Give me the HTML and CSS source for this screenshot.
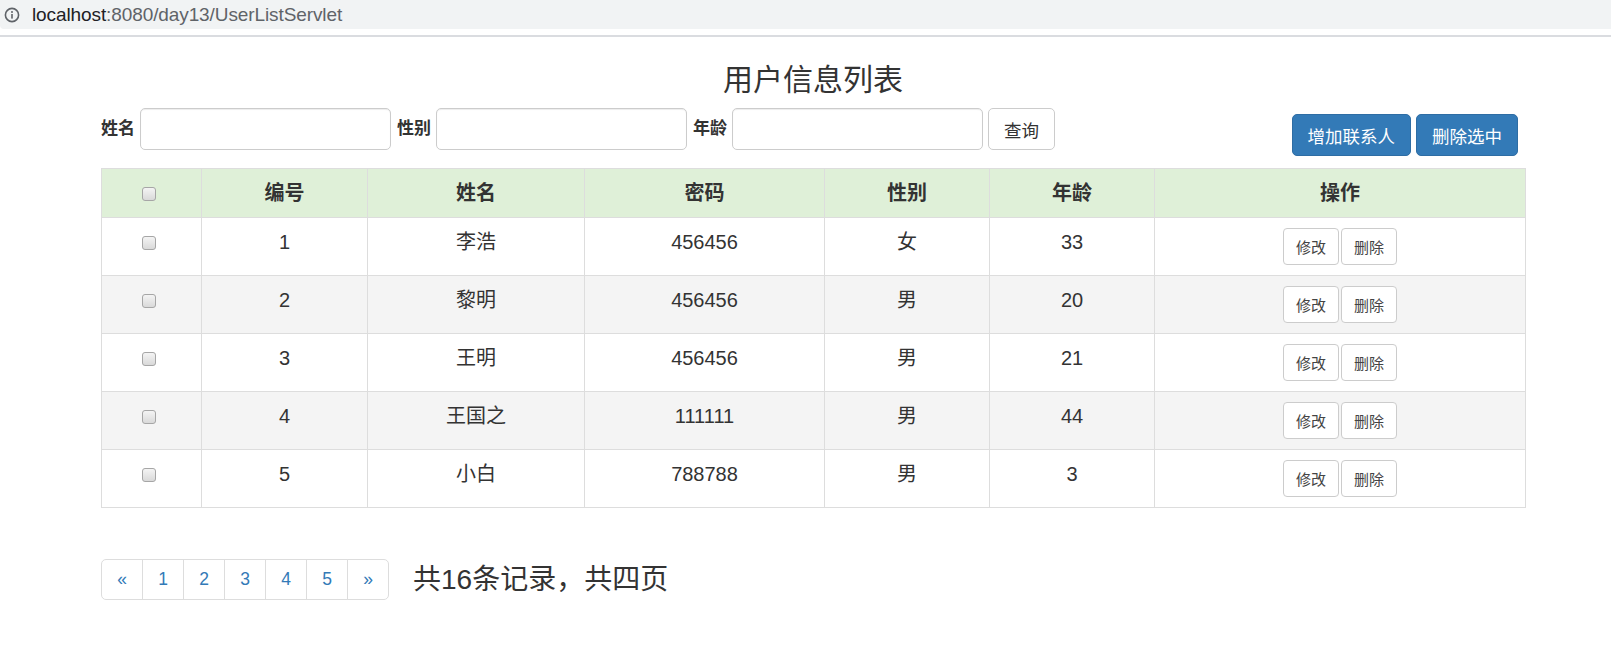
FILE: index.html
```html
<!DOCTYPE html>
<html lang="zh-CN">
<head>
<meta charset="utf-8">
<title>用户信息列表</title>
<link rel="stylesheet" href="styles.css">
</head>
<body>
<div class="chrome">
  <svg class="info-icon" width="16" height="16" viewBox="0 0 16 16" aria-hidden="true">
    <circle cx="8" cy="8" r="6.6" fill="none" stroke="#5f6368" stroke-width="1.6"/>
    <rect x="7.2" y="7" width="1.6" height="4.6" fill="#5f6368"/>
    <circle cx="8" cy="4.9" r="1" fill="#5f6368"/>
  </svg>
  <span class="url"><span class="host">localhost</span><span class="path">:8080/day13/UserListServlet</span></span>
</div>
<div class="chrome-line"></div>

<div class="container">
  <h3 class="title">用户信息列表</h3>

  <div class="toolbar">
    <form class="search">
      <label class="lbl">姓名</label>
      <input class="field" type="text">
      <label class="lbl">性别</label>
      <input class="field" type="text">
      <label class="lbl">年龄</label>
      <input class="field" type="text">
      <button class="btn btn-default" type="button">查询</button>
    </form>
    <div class="actions">
      <button class="btn btn-primary" type="button">增加联系人</button>
      <button class="btn btn-primary" type="button">删除选中</button>
    </div>
  </div>

  <table class="users">
    <colgroup>
      <col class="c-check"><col class="c-id"><col class="c-name"><col class="c-pwd"><col class="c-gender"><col class="c-age"><col class="c-op">
    </colgroup>
    <thead>
      <tr>
        <th><input class="cb" type="checkbox"></th>
        <th>编号</th><th>姓名</th><th>密码</th><th>性别</th><th>年龄</th><th>操作</th>
      </tr>
    </thead>
    <tbody>
      <tr>
        <td><input class="cb" type="checkbox"></td>
        <td>1</td><td>李浩</td><td>456456</td><td>女</td><td>33</td>
        <td><div class="ops"><button class="btn btn-sm" type="button">修改</button><button class="btn btn-sm" type="button">删除</button></div></td>
      </tr>
      <tr>
        <td><input class="cb" type="checkbox"></td>
        <td>2</td><td>黎明</td><td>456456</td><td>男</td><td>20</td>
        <td><div class="ops"><button class="btn btn-sm" type="button">修改</button><button class="btn btn-sm" type="button">删除</button></div></td>
      </tr>
      <tr>
        <td><input class="cb" type="checkbox"></td>
        <td>3</td><td>王明</td><td>456456</td><td>男</td><td>21</td>
        <td><div class="ops"><button class="btn btn-sm" type="button">修改</button><button class="btn btn-sm" type="button">删除</button></div></td>
      </tr>
      <tr>
        <td><input class="cb" type="checkbox"></td>
        <td>4</td><td>王国之</td><td>111111</td><td>男</td><td>44</td>
        <td><div class="ops"><button class="btn btn-sm" type="button">修改</button><button class="btn btn-sm" type="button">删除</button></div></td>
      </tr>
      <tr>
        <td><input class="cb" type="checkbox"></td>
        <td>5</td><td>小白</td><td>788788</td><td>男</td><td>3</td>
        <td><div class="ops"><button class="btn btn-sm" type="button">修改</button><button class="btn btn-sm" type="button">删除</button></div></td>
      </tr>
    </tbody>
  </table>

  <div class="footer">
    <ul class="pagination">
      <li><a href="#">&laquo;</a></li>
      <li><a href="#">1</a></li>
      <li><a href="#">2</a></li>
      <li><a href="#">3</a></li>
      <li><a href="#">4</a></li>
      <li><a href="#">5</a></li>
      <li><a href="#">&raquo;</a></li>
    </ul>
    <span class="summary">共16条记录，共四页</span>
  </div>
</div>
</body>
</html>
```

FILE: styles.css
```css
* { box-sizing: border-box; }

html, body {
  margin: 0;
  padding: 0;
  background: #fff;
}

body {
  font-family: "Liberation Sans", "Noto Sans CJK SC", Arial, sans-serif;
  color: #333;
  font-size: 17.5px;
}

/* browser chrome */
.chrome {
  height: 29px;
  background: #f1f3f4;
  display: flex;
  align-items: center;
  padding-left: 4px;
  border-bottom-left-radius: 4px;
}

.info-icon {
  display: block;
  flex: none;
}

.url {
  margin-left: 12px;
  font-family: "Liberation Sans", Arial, sans-serif;
  font-size: 19px;
  line-height: 22px;
  letter-spacing: -0.1px;
}

.host { color: #202124; }
.path { color: #5f6368; }

.chrome-line {
  height: 2px;
  margin-top: 6px;
  background: #dadce0;
}

/* page */
.container {
  width: 1424px;
  margin-left: 101px;
}

.title {
  margin: 26px 0 0;
  font-size: 30px;
  line-height: 33px;
  font-weight: normal;
  text-align: center;
  color: #333;
}

.toolbar {
  margin-top: 12px;
  display: flex;
  justify-content: space-between;
  align-items: flex-start;
}

.search {
  display: flex;
  align-items: center;
  margin: 0;
}

.lbl {
  font-weight: bold;
  font-size: 17px;
  line-height: 24px;
  margin-right: 5px;
}

.field {
  width: 251px;
  height: 42px;
  border: 1px solid #ccc;
  border-radius: 5px;
  box-shadow: inset 0 1px 1px rgba(0, 0, 0, 0.075);
  padding: 0 15px;
  margin-right: 6px;
  font-size: 17.5px;
  background: #fff;
}

.btn {
  font-family: "Liberation Sans", "Noto Sans CJK SC", Arial, sans-serif;
  display: inline-flex;
  align-items: center;
  justify-content: center;
  border: 1px solid #ccc;
  background: #fff;
  color: #333;
  cursor: pointer;
  margin: 0;
}

.btn-default {
  height: 42px;
  padding: 0 15px;
  font-size: 17.5px;
  border-radius: 5px;
  margin-left: -1px;
}

.actions {
  display: flex;
  gap: 5px;
  margin-top: 6px;
  margin-right: 7px;
}

.btn-primary {
  height: 42px;
  padding: 0 15px;
  font-size: 17.5px;
  border-radius: 5px;
  background: #337ab7;
  border-color: #2e6da4;
  color: #fff;
}

.btn-sm {
  height: 37px;
  padding: 0 12px;
  font-size: 15px;
  border-radius: 4px;
  color: #444;
}

/* table */
.users {
  margin-top: 12px;
  width: 1424px;
  border-collapse: collapse;
  table-layout: fixed;
  font-size: 20px;
}

.c-check { width: 100px; }
.c-id { width: 166px; }
.c-name { width: 217px; }
.c-pwd { width: 240px; }
.c-gender { width: 165px; }
.c-age { width: 165px; }
.c-op { width: 371px; }

.users th,
.users td {
  border: 1px solid #ddd;
  padding: 10px;
  line-height: 28px;
  text-align: center;
  vertical-align: top;
}

.users th {
  font-weight: bold;
  background: #dff0d8;
}

.users tbody tr:nth-child(even) td {
  background: #f4f4f4;
}

.cb {
  -webkit-appearance: none;
  appearance: none;
  width: 14px;
  height: 14px;
  margin: 0 5px 0 0;
  vertical-align: -1px;
  border: 1px solid #a6a6a6;
  border-radius: 3px;
  background: linear-gradient(#f4f4f4, #d9d9d9);
}

.ops {
  display: flex;
  justify-content: center;
  gap: 2px;
}

/* footer */
.footer {
  margin-top: 51px;
  display: flex;
  align-items: center;
}

.pagination {
  display: flex;
  list-style: none;
  margin: 0;
  padding: 0;
}

.pagination li a {
  display: block;
  width: 42px;
  padding: 7px 0;
  text-align: center;
  line-height: 25px;
  font-size: 17.5px;
  color: #337ab7;
  text-decoration: none;
  border: 1px solid #ddd;
  margin-left: -1px;
  background: #fff;
}

.pagination li:first-child a {
  margin-left: 0;
  border-top-left-radius: 5px;
  border-bottom-left-radius: 5px;
}

.pagination li:last-child a {
  border-top-right-radius: 5px;
  border-bottom-right-radius: 5px;
}

.summary {
  margin-left: 24px;
  font-size: 28px;
  line-height: 40px;
  color: #333;
}
```
